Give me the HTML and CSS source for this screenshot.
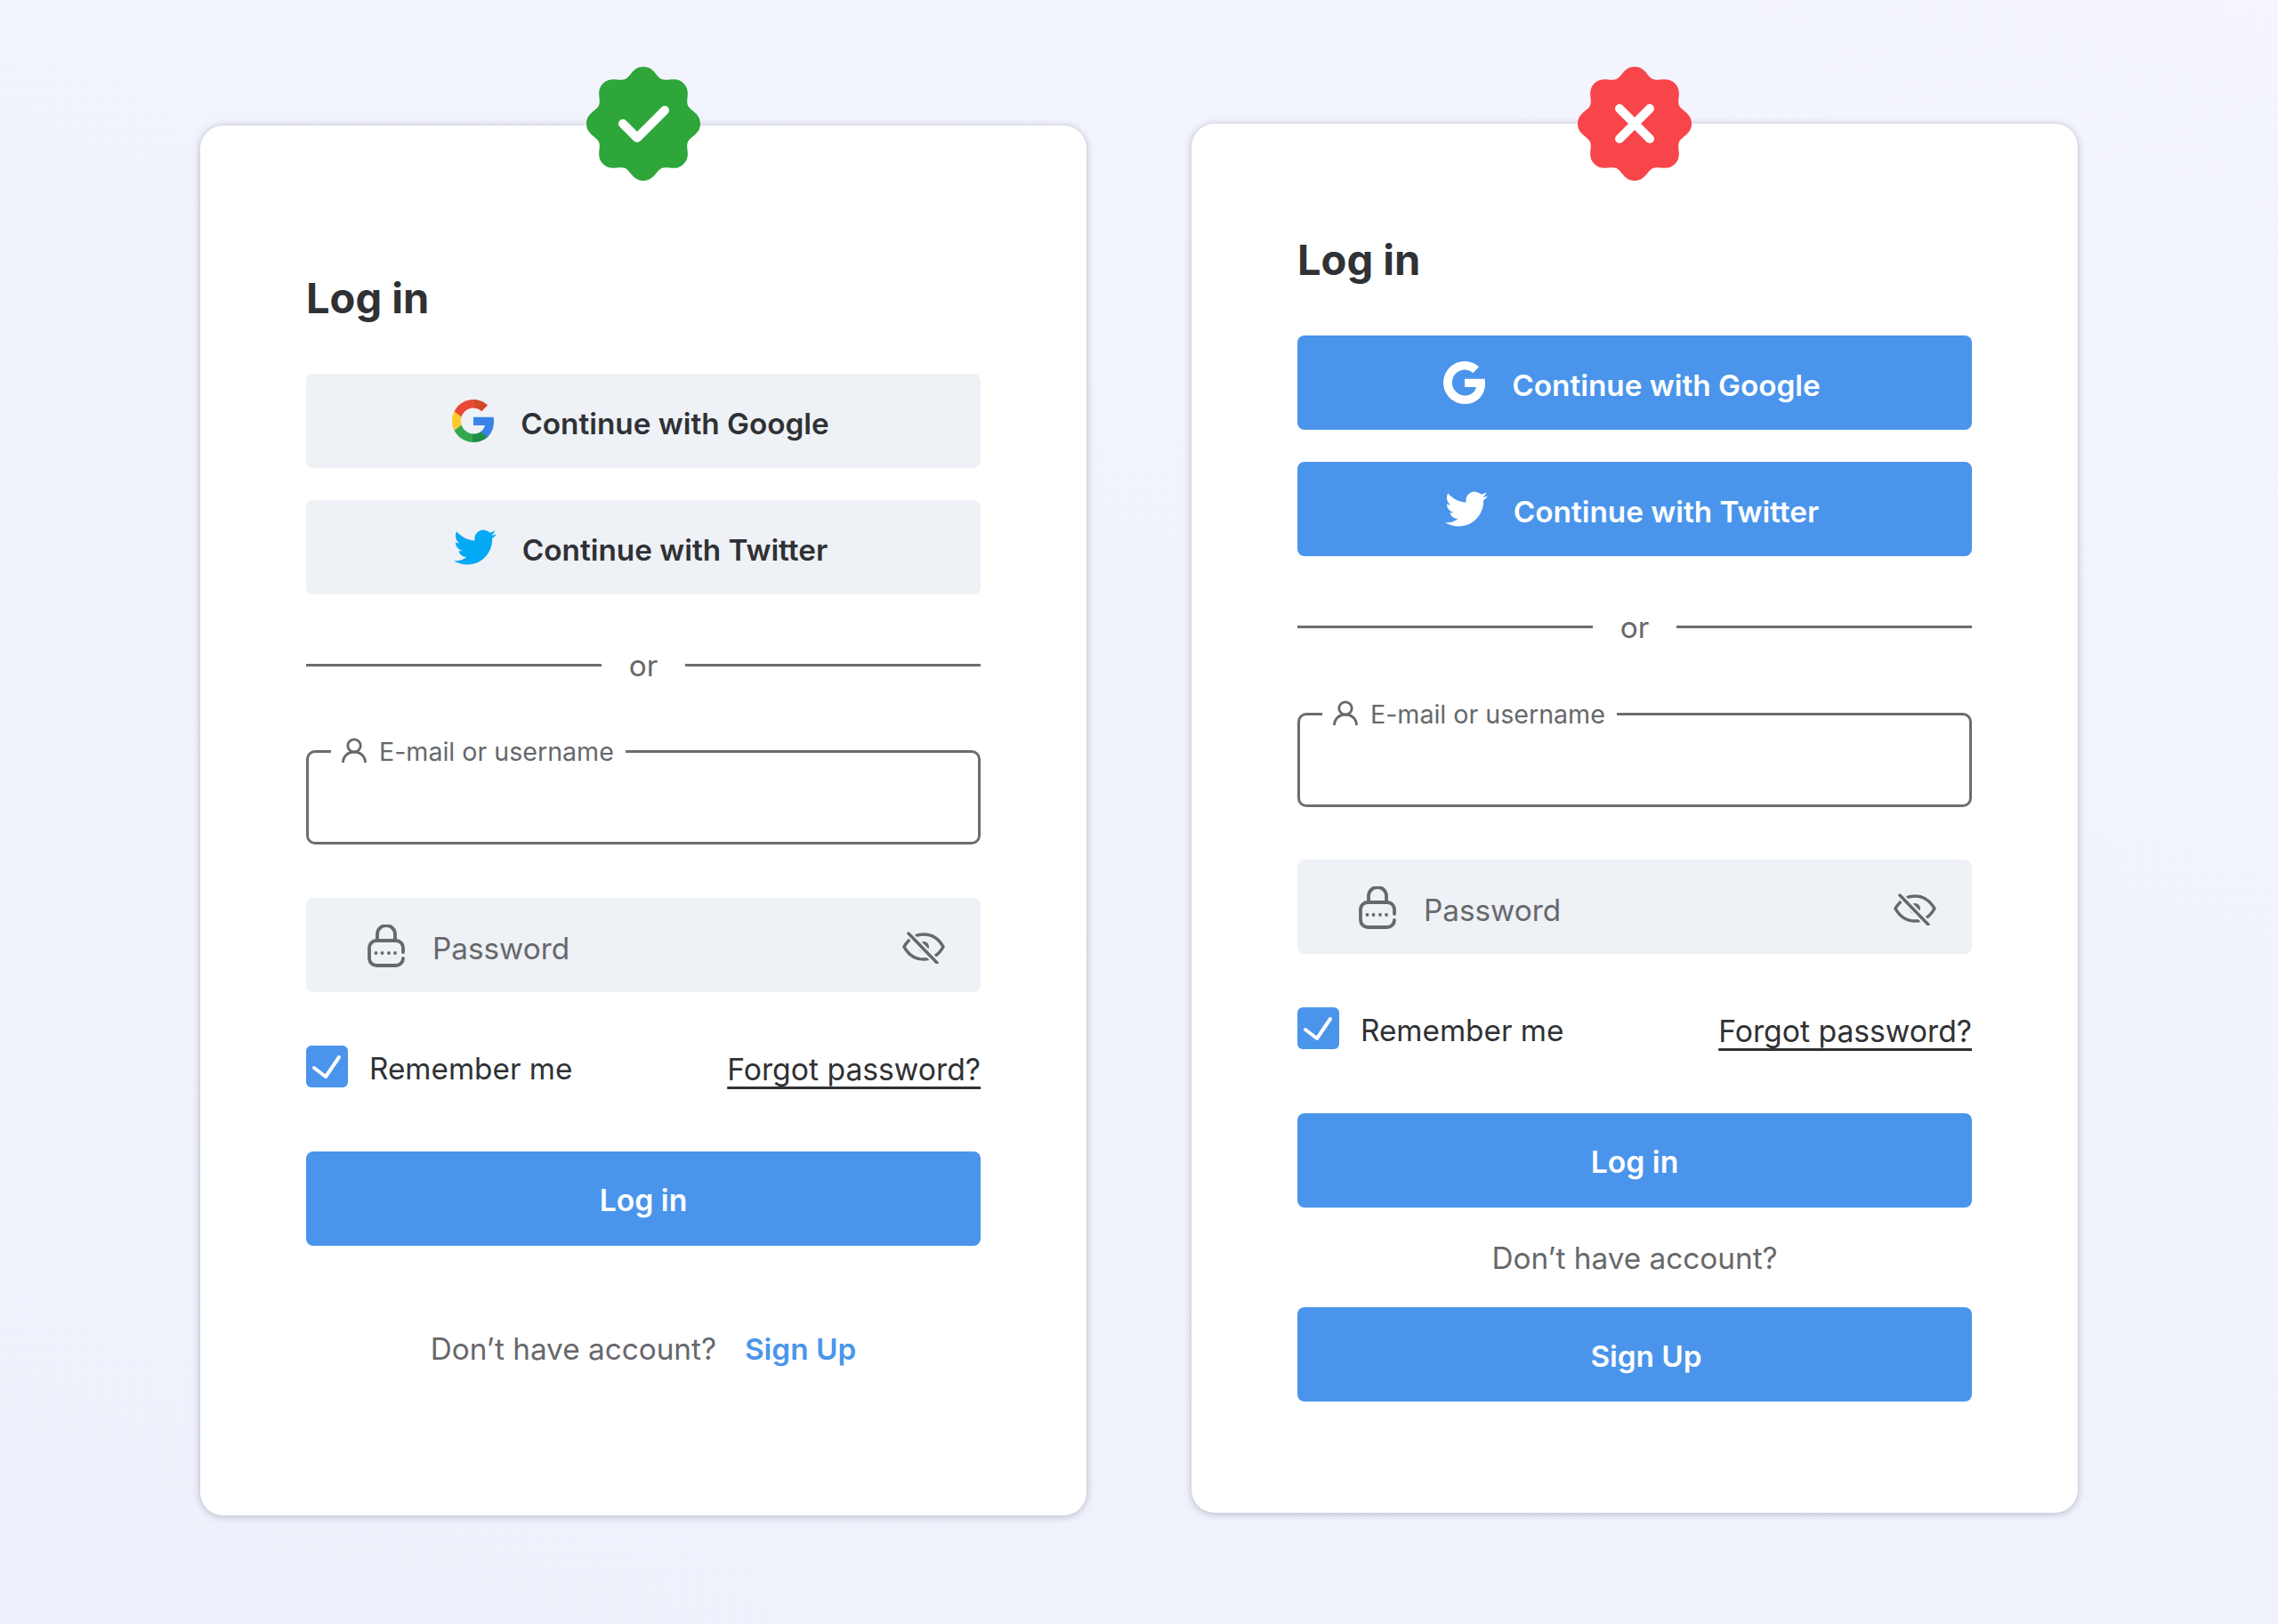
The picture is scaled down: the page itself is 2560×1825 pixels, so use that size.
FILE: index.html
```html
<!DOCTYPE html>
<html lang="en">
<head>
    <meta charset="UTF-8">
    <title>Log in - do and don't</title>
    <link rel="stylesheet" href="styles.css">
</head>
<body>
    <svg class="defs" aria-hidden="true">
        <defs>
            <linearGradient id="gRed" x1="0" x2="1" y1="0" y2="0">
                <stop offset="0.6" stop-color="#ea4a35"/>
                <stop offset="0.6" stop-color="#d2482a"/>
            </linearGradient>
            <linearGradient id="gGreen" x1="0" x2="1" y1="0" y2="0">
                <stop offset="0.55" stop-color="#34a84f"/>
                <stop offset="0.55" stop-color="#1f8f46"/>
            </linearGradient>
            <symbol id="seal" viewBox="-64 -64 128 128">
                <path d="M64 0C64 12 52.6 14.2 49.9 20.7C47.2 27.2 53.8 36.8 45.3 45.3C36.8 53.8 27.2 47.2 20.7 49.9C14.2 52.6 12 64 0 64C-12 64 -14.2 52.6 -20.7 49.9C-27.2 47.2 -36.8 53.8 -45.3 45.3C-53.8 36.8 -47.2 27.2 -49.9 20.7C-52.6 14.2 -64 12 -64 0C-64 -12 -52.6 -14.2 -49.9 -20.7C-47.2 -27.2 -53.8 -36.8 -45.3 -45.3C-36.8 -53.8 -27.2 -47.2 -20.7 -49.9C-14.2 -52.6 -12 -64 0 -64C12 -64 14.2 -52.6 20.7 -49.9C27.2 -47.2 36.8 -53.8 45.3 -45.3C53.8 -36.8 47.2 -27.2 49.9 -20.7C52.6 -14.2 64 -12 64 0Z"/>
            </symbol>
            <symbol id="twitter" viewBox="0 0 24 24">
                <path d="M23.953 4.57a10 10 0 01-2.825.775 4.958 4.958 0 002.163-2.723c-.951.555-2.005.959-3.127 1.184a4.92 4.92 0 00-8.384 4.482C7.69 8.095 4.067 6.13 1.64 3.162a4.822 4.822 0 00-.666 2.475c0 1.71.87 3.213 2.188 4.096a4.904 4.904 0 01-2.228-.616v.06a4.923 4.923 0 003.946 4.827 4.996 4.996 0 01-2.212.085 4.936 4.936 0 004.604 3.417 9.867 9.867 0 01-6.102 2.105c-.39 0-.779-.023-1.17-.067a13.995 13.995 0 007.557 2.209c9.053 0 13.998-7.496 13.998-13.985 0-.21 0-.42-.015-.63A9.935 9.935 0 0024 4.59z"/>
            </symbol>
            <symbol id="google-white" viewBox="1 1 22 22">
                <path d="M22.56 12.25c0-.78-.07-1.53-.2-2.25H12v4.26h5.92c-.26 1.37-1.04 2.53-2.21 3.31-.98.66-2.23 1.06-3.71 1.06-2.86 0-5.29-1.93-6.16-4.53-.22-.66-.35-1.36-.35-2.09s.13-1.43.35-2.09c.87-2.6 3.3-4.53 6.16-4.53 1.62 0 3.06.56 4.21 1.64l3.15-3.15C17.45 2.09 14.97 1 12 1 7.7 1 3.99 3.47 2.18 7.07 1.43 8.55 1 10.22 1 12s.43 3.45 1.18 4.93C3.99 20.53 7.7 23 12 23c2.97 0 5.46-.98 7.28-2.66 2.08-1.92 3.28-4.74 3.28-8.09z"/>
            </symbol>
            <symbol id="google-color" viewBox="1 1 22 22">
                <path fill="#3b82e8" d="M22.56 12.25c0-.78-.07-1.53-.2-2.25H12v4.26h5.92c-.26 1.37-1.04 2.53-2.21 3.31v2.77h3.57c2.08-1.92 3.28-4.74 3.28-8.09z"/>
                <path fill="url(#gGreen)" d="M12 23c2.97 0 5.46-.98 7.28-2.66l-3.57-2.77c-.98.66-2.23 1.06-3.71 1.06-2.86 0-5.29-1.93-6.16-4.53H2.18v2.84C3.99 20.53 7.7 23 12 23z"/>
                <path fill="#fbc92b" d="M5.84 14.09c-.22-.66-.35-1.36-.35-2.09s.13-1.43.35-2.09V7.07H2.18C1.43 8.55 1 10.22 1 12s.43 3.45 1.18 4.93l2.85-2.22.81-.62z"/>
                <path fill="url(#gRed)" d="M12 5.38c1.62 0 3.06.56 4.21 1.64l3.15-3.15C17.45 2.09 14.97 1 12 1 7.7 1 3.99 3.47 2.18 7.07l3.66 2.84c.87-2.6 3.3-4.53 6.16-4.53z"/>
            </symbol>
            <symbol id="person" viewBox="0 0 28 29">
                <circle cx="14" cy="9" r="7.2" fill="none" stroke="currentColor" stroke-width="2.8"/>
                <path d="M1.5 28C1.5 21 7 16 14 16S26.500 21 26.500 28" fill="none" stroke="currentColor" stroke-width="2.800"/>
            </symbol>
            <symbol id="lock" viewBox="0 0 42 48">
                <g fill="none" stroke="currentColor" stroke-width="3.800" stroke-linecap="round">
                    <path d="M40 31V26A8 8 0 0 0 32 18H10A8 8 0 0 0 2 26V38A8 8 0 0 0 10 46H32A8 8 0 0 0 40 38"/>
                    <path d="M11 18V11A10 10 0 0 1 31 11V18"/>
                </g>
                <circle cx="9.500" cy="32" r="1.900" fill="currentColor"/>
                <circle cx="16.500" cy="32" r="1.900" fill="currentColor"/>
                <circle cx="24" cy="32" r="1.900" fill="currentColor"/>
                <circle cx="31" cy="32" r="1.900" fill="currentColor"/>
            </symbol>
            <symbol id="eye-off" viewBox="0 0 48 36">
                <path d="M2 17C7 8 14 3 24 3C34 3 41 8 46 17C41 26 34 31 24 31C14 31 7 26 2 17Z" fill="none" stroke="currentColor" stroke-width="3.500"/>
                <circle cx="24" cy="17" r="6" fill="currentColor"/>
                <path d="M7 2L39 35" stroke="#eef1f6" stroke-width="8"/>
                <path d="M7 2L39 35" stroke="currentColor" stroke-width="3.500" stroke-linecap="round"/>
            </symbol>
        </defs>
    </svg>

    <div class="page">
        <!-- good version -->
        <section class="card card-good">
            <svg class="badge badge-good" viewBox="-64 -64 128 128">
                <use href="#seal" x="-64" y="-64" width="128" height="128"/>
                <path class="badge-mark" d="M-23 0L-7 16L24 -15"/>
            </svg>
            <h1 class="title">Log in</h1>
            <a class="btn btn-soft">
                <svg class="btn-icon"><use href="#google-color"/></svg>
                <span class="btn-text">Continue with Google</span>
            </a>
            <a class="btn btn-soft btn-next">
                <svg class="btn-icon icon-twitter"><use href="#twitter"/></svg>
                <span class="btn-text">Continue with Twitter</span>
            </a>
            <div class="divider"><span>or</span></div>
            <div class="field-outlined">
                <label class="field-label">
                    <svg class="person-icon"><use href="#person"/></svg>
                    E-mail or username
                </label>
            </div>
            <div class="field-filled">
                <svg class="lock-icon"><use href="#lock"/></svg>
                <span class="field-placeholder">Password</span>
                <svg class="eye-icon"><use href="#eye-off"/></svg>
            </div>
            <div class="options">
                <label class="remember">
                    <span class="checkbox">
                        <svg viewBox="0 0 47 47"><path d="M9 25L22 35L37 13"/></svg>
                    </span>
                    <span class="option-text">Remember me</span>
                </label>
                <a class="forgot option-text">Forgot password?</a>
            </div>
            <a class="btn btn-primary btn-login">Log in</a>
            <p class="signup-line">
                <span class="muted">Don’t have account?</span>
                <a class="signup-link">Sign Up</a>
            </p>
        </section>

        <!-- bad version -->
        <section class="card card-bad">
            <svg class="badge badge-bad" viewBox="-64 -64 128 128">
                <use href="#seal" x="-64" y="-64" width="128" height="128"/>
                <path class="badge-mark" d="M-17 -17L17 17M17 -17L-17 17"/>
            </svg>
            <h1 class="title">Log in</h1>
            <a class="btn btn-primary">
                <svg class="btn-icon icon-white"><use href="#google-white"/></svg>
                <span class="btn-text">Continue with Google</span>
            </a>
            <a class="btn btn-primary btn-next">
                <svg class="btn-icon icon-white"><use href="#twitter"/></svg>
                <span class="btn-text">Continue with Twitter</span>
            </a>
            <div class="divider"><span>or</span></div>
            <div class="field-outlined">
                <label class="field-label">
                    <svg class="person-icon"><use href="#person"/></svg>
                    E-mail or username
                </label>
            </div>
            <div class="field-filled">
                <svg class="lock-icon"><use href="#lock"/></svg>
                <span class="field-placeholder">Password</span>
                <svg class="eye-icon"><use href="#eye-off"/></svg>
            </div>
            <div class="options">
                <label class="remember">
                    <span class="checkbox">
                        <svg viewBox="0 0 47 47"><path d="M9 25L22 35L37 13"/></svg>
                    </span>
                    <span class="option-text">Remember me</span>
                </label>
                <a class="forgot option-text">Forgot password?</a>
            </div>
            <a class="btn btn-primary btn-login">Log in</a>
            <p class="signup-stack muted">Don’t have account?</p>
            <a class="btn btn-primary btn-signup">Sign Up</a>
        </section>
    </div>
</body>
</html>
```

FILE: styles.css
```css
:root {
    --blue: #4a95eb;
    --soft: #eef1f6;
    --text: #2f3134;
    --muted: #66686c;
    --line: #6b6d70;
}

html, body {
    margin: 0;
    padding: 0;
}

body {
    min-height: 1825px;
    background: linear-gradient(20deg, #eef0fb 0%, #f1f3fc 50%, #f4f5fe 100%);
    font-family: Inter, "Liberation Sans", sans-serif;
    color: var(--text);
}

.defs {
    position: absolute;
    width: 0;
    height: 0;
}

.page {
    display: flex;
    align-items: flex-start;
    gap: 118px;
    padding-left: 225px;
}

.card {
    position: relative;
    box-sizing: border-box;
    width: 996px;
    height: 1562px;
    padding-left: 119px;
    padding-right: 119px;
    background: #fff;
    border-radius: 26px;
    box-shadow: 0 1px 9px rgba(70, 75, 110, 0.36);
}

.card-good {
    margin-top: 141px;
    padding-top: 164px;
}

.card-bad {
    height: 1561px;
    margin-top: 139px;
    padding-top: 123px;
}

.badge {
    position: absolute;
    top: -66px;
    left: 434px;
    width: 128px;
    height: 128px;
}

.badge-good {
    fill: #2ea63a;
}

.badge-bad {
    top: -64px;
    fill: #f8454a;
}

.badge-mark {
    fill: none;
    stroke: #fff;
    stroke-width: 10;
    stroke-linecap: round;
    stroke-linejoin: round;
}

.title {
    margin: 0 0 55px;
    font-size: 47px;
    line-height: 60px;
    font-weight: 700;
}

.btn {
    display: flex;
    align-items: center;
    justify-content: center;
    gap: 29px;
    box-sizing: border-box;
    height: 106px;
    border-radius: 8px;
    font-size: 33.3px;
    font-weight: 600;
}

.btn-text {
    padding-top: 5px;
}

.btn-next {
    margin-top: 36px;
}

.btn-soft {
    background: var(--soft);
    color: var(--text);
}

.btn-primary {
    background: var(--blue);
    color: #fff;
}

.btn-icon {
    width: 48px;
    height: 48px;
    margin-left: -6px;
}

.icon-twitter {
    fill: #03a9f4;
}

.icon-white {
    fill: #fff;
}

.divider {
    display: flex;
    align-items: center;
    gap: 31px;
    height: 40px;
    margin-top: 59px;
    font-size: 33.3px;
    color: var(--muted);
}

.divider span {
    padding-top: 2px;
}

.divider::before,
.divider::after {
    content: "";
    flex: 1;
    height: 3px;
    background: var(--line);
}

.field-outlined {
    position: relative;
    box-sizing: border-box;
    height: 106px;
    margin-top: 76px;
    border: 3px solid var(--line);
    border-radius: 10px;
}

.card-bad .field-outlined {
    margin-top: 77px;
}

.card-bad .field-filled {
    margin-top: 59px;
}

.field-label {
    position: absolute;
    top: -17px;
    left: 25px;
    display: flex;
    align-items: center;
    gap: 14px;
    height: 30px;
    padding: 0 13px 0 12px;
    background: #fff;
    font-size: 28.6px;
    color: var(--muted);
}

.person-icon {
    width: 28px;
    height: 29px;
    margin-top: -2px;
}

.field-filled {
    display: flex;
    align-items: center;
    box-sizing: border-box;
    height: 106px;
    margin-top: 60px;
    padding: 0 40px 0 69px;
    border-radius: 8px;
    background: var(--soft);
    color: var(--muted);
}

.lock-icon {
    width: 42px;
    height: 48px;
    margin-top: 2px;
}

.field-placeholder {
    flex: 1;
    margin-left: 31px;
    padding-top: 7px;
    font-size: 33.3px;
}

.eye-icon {
    width: 48px;
    height: 36px;
    margin-top: 5px;
}

.options {
    display: flex;
    align-items: center;
    justify-content: space-between;
    margin-top: 60px;
    font-size: 33.3px;
}

.option-text {
    padding-top: 5px;
}

.remember {
    display: flex;
    align-items: center;
    gap: 24px;
}

.checkbox {
    display: block;
    width: 47px;
    height: 47px;
    border-radius: 6px;
    background: var(--blue);
}

.checkbox svg {
    display: block;
    fill: none;
    stroke: #fff;
    stroke-width: 4;
    stroke-linecap: round;
    stroke-linejoin: round;
}

.forgot {
    font-size: 33.7px;
    text-decoration: underline;
    text-underline-offset: 7px;
    text-decoration-thickness: 3px;
    text-decoration-skip-ink: none;
}

.btn-login {
    margin-top: 72px;
    padding-top: 3px;
    font-size: 33.7px;
}

.muted {
    color: var(--muted);
}

.signup-line {
    display: flex;
    justify-content: center;
    gap: 32px;
    margin: 96px 0 0;
    font-size: 33.3px;
    line-height: 40px;
}

.signup-link {
    color: var(--blue);
    font-weight: 600;
}

.signup-stack {
    margin: 37px 0 35px;
    font-size: 33.3px;
    line-height: 40px;
    text-align: center;
}

.btn-signup {
    padding: 3px 0 0 26px;
}
```
